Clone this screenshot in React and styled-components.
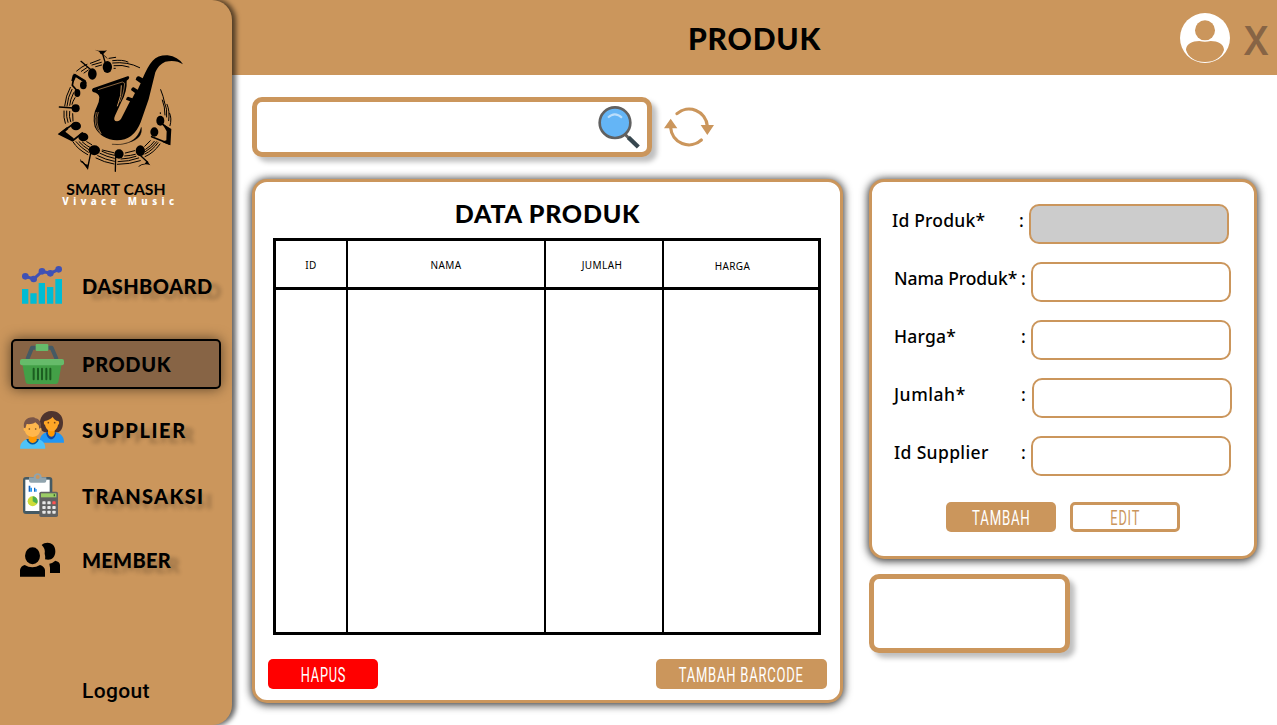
import React from "react";
import styled, { createGlobalStyle } from "styled-components";

const TAN = "#cb965c";
const BROWN = "#876445";

const GlobalStyle = createGlobalStyle`
  * { box-sizing: border-box; }
  body { margin: 0; background: #fff; overflow: hidden; }
`;

const Page = styled.div`
  display: flex;
  width: 1277px;
  height: 725px;
  background: linear-gradient(${TAN} 75px, #fff 75px);
  font-family: Lato, "Liberation Sans", sans-serif;
  color: #000;
`;

const Sidebar = styled.aside`
  position: relative;
  flex: 0 0 232px;
  height: 725px;
  background: ${TAN};
  border-radius: 0 20px 20px 0;
  box-shadow: 3px 0 5px 1px rgba(0, 0, 0, 0.6);
`;

const LogoWrap = styled.div`
  padding: 35px 0 0 40px;
  height: 261px;
  svg { display: block; }
`;

const NavItem = styled.a`
  display: flex;
  align-items: center;
  width: 210px;
  height: 50px;
  margin: 0 0 ${(p) => p.$gap || 0}px 11px;
  padding-left: 7px;
  border: 2px solid ${(p) => (p.$active ? "#000" : "transparent")};
  border-radius: 5px;
  background: ${(p) => (p.$active ? BROWN : "transparent")};
  box-shadow: ${(p) => (p.$active ? "0 0 13px rgba(0,0,0,.55)" : "none")};
  svg { flex: none; margin-right: 18px; }
`;

const NavText = styled.span`
  font-size: 20px;
  font-weight: 900;
  line-height: 24px;
  white-space: nowrap;
  letter-spacing: ${(p) => p.$track}px;
  text-shadow: ${(p) => (p.$flat ? "none" : "9px 5px 4px rgba(0,0,0,.24)")};
`;

const Logout = styled.a`
  display: block;
  margin: 81px 0 0 82px;
  padding-top: 13px;
  font: 500 21px/24px Roboto, sans-serif;
  letter-spacing: 0.35px;
`;

const Main = styled.main`
  flex: 1;
  min-width: 0;
`;

const Header = styled.header`
  display: flex;
  align-items: center;
  height: 75px;
  padding-left: 456px;
`;

const PageTitle = styled.h1`
  flex: 0 0 492px;
  margin: 0;
  font-size: 30px;
  font-weight: 900;
  line-height: 36px;
  letter-spacing: 0.8px;
`;

const Close = styled.button`
  margin: 6px 0 0 13px;
  padding: 0;
  border: 0;
  background: none;
  color: ${BROWN};
  font: 600 40px/48px Inter, sans-serif;
  transform: scaleX(0.91);
  transform-origin: left;
`;

const Content = styled.div`
  padding: 22px 0 0 20px;
`;

const SearchRow = styled.div`
  display: flex;
  align-items: center;
  gap: 12px;
  height: 60px;
`;

const SearchBox = styled.div`
  display: flex;
  justify-content: flex-end;
  width: 400px;
  height: 60px;
  padding-right: 3px;
  border: 5px solid ${TAN};
  border-radius: 10px;
  background: #fff;
  box-shadow: 5px 5px 5px rgba(0, 0, 0, 0.25);
`;

const Columns = styled.div`
  display: flex;
  align-items: flex-start;
  gap: 26px;
  margin-top: 22px;
`;

const Card = styled.section`
  width: ${(p) => p.$w}px;
  height: ${(p) => p.$h}px;
  border: 3px solid ${TAN};
  border-radius: 15px;
  background: #fff;
  box-shadow: 0 1px 9px 1px rgba(0, 0, 0, 0.8);
`;

const CardTitle = styled.h2`
  margin: 0;
  padding-top: 15px;
  height: 56px;
  text-align: center;
  font-size: 25px;
  font-weight: 900;
  line-height: 32px;
  letter-spacing: 0.75px;
`;

const Table = styled.div`
  display: grid;
  grid-template-columns: 72px 198px 118px 154px;
  grid-template-rows: 49px 342px;
  width: 548px;
  height: 397px;
  margin-left: 18px;
  border: 3px solid #000;
`;

const Cell = styled.div`
  border-right: ${(p) => (p.$last ? 0 : 2)}px solid #000;
  border-bottom: ${(p) => (p.$head ? 3 : 0)}px solid #000;
  padding-top: ${(p) => (p.$last ? 18 : 17)}px;
  padding-right: ${(p) => p.$pull || 0}px;
  text-align: center;
  font: 400 10px/14px "Noto Sans", sans-serif;
  letter-spacing: 0.4px;
`;

const TableActions = styled.div`
  display: flex;
  justify-content: space-between;
  padding: 24px 13px 0;
`;

const Button = styled.button`
  display: flex;
  align-items: center;
  justify-content: center;
  width: ${(p) => p.$w || 110}px;
  height: 30px;
  padding: 0;
  border: ${(p) => (p.$outline ? `3px solid ${TAN}` : 0)};
  border-radius: 5px;
  background: ${(p) => (p.$outline ? "#fff" : p.$bg || TAN)};
  color: ${(p) => (p.$outline ? TAN : "#fff")};
`;

const Narrow = styled.span`
  font: 400 20px/30px Roboto, sans-serif;
  white-space: nowrap;
  letter-spacing: 1.2px;
  transform: translateY(0.5px) scaleX(${(p) => p.$scale});
`;

const Side = styled.div`
  display: flex;
  flex-direction: column;
  gap: 15px;
`;

const Fields = styled.div`
  display: flex;
  flex-direction: column;
  gap: 18px;
  padding: 22px 0 26px;
`;

const Field = styled.label`
  display: flex;
  padding-left: ${(p) => p.$left}px;
  font: 500 17.5px/26px "Noto Sans", sans-serif;
`;

const FieldName = styled.span`
  flex: 0 0 127px;
  min-width: 0;
  padding-top: 3px;
  white-space: nowrap;
  letter-spacing: ${(p) => p.$track}px;
`;

const Colon = styled.span`
  flex: 0 0 ${(p) => p.$w}px;
  min-width: 0;
  padding-top: 3px;
`;

const Input = styled.input`
  flex: none;
  width: 200px;
  height: 40px;
  border: 2px solid ${TAN};
  border-radius: 10px;
  background: #fff;
  &:disabled { background: #ccc; }
`;

const FormActions = styled.div`
  display: flex;
  gap: 14px;
  padding-left: 74px;
`;

const Preview = styled.div`
  width: 201px;
  height: 79px;
  border: 5px solid ${TAN};
  border-radius: 10px;
  background: #fff;
  box-shadow: 5px 5px 5px rgba(0, 0, 0, 0.25);
`;

const NOTES = [
  [202, 96, 14, 18], [157, 117, 13, 17], [130, 151, 10, 12], [112, 174, 9, 12],
  [107, 220, 12, 12], [108, 273, 15, 13], [130, 306, 15, 13], [163, 346, 17, 15],
  [237, 357, 14, 14], [301, 347, 14, 16], [343, 291, 12, 14], [361, 257, 12, 15],
];

function Logo() {
  return (
    <svg width="160" height="180" viewBox="0 0 480 540">
      <g fill="none" stroke="#000" strokeWidth="3" strokeLinecap="round">
        <path d="M207 70l20-3M218 77q30-4 46 4M218 84q45-5 81 14M222 92q26-3 45 4M222 100h4" />
        <path d="M141 88q-15 6-31 20M142 97l-18 12M145 105l-13 9M180 74l-29 11M184 82l-28 8M185 90l-18 5" />
        <path d="M91 157q-14 25-17 56M96 163q-13 24-15 50M101 173q-11 22-12 38M105 188q-8 13-9 20" />
        <path d="M72 228q-2 20 4 37M80 228q-2 17 4 34M89 229q-3 16 3 31M98 236l1 22" />
        <path d="M100 322q12 20 43 37M108 320q13 17 37 32M117 320q11 13 31 25M127 321q13 12 26 18M140 320l15 9" />
        <path d="M168 369q24 13 54 18M173 362q23 12 50 17M180 355q20 10 43 15M186 349q16 8 37 12M187 345l34 8" />
        <path d="M232 388q38 0 69-11M234 380q32 0 62-11M243 372q25-1 45-8M254 363q18-1 32-5M256 354l28-7" />
        <path d="M315 365q26-11 45-38M315 357q23-11 39-34M316 350q21-12 34-30M317 343q16-10 26-24M314 334l17-17" />
        <path d="M362 164q9 22 11 36M367 195q8 20 8 45M373 200q10 22 7 46M381 208q9 20 5 49M389 235q7 15 1 37M361 233v3" />
        <path d="M196 84L188 57" strokeWidth="4" />
        <path d="M157 108L123 79" strokeWidth="4" />
        <path d="M112 168L97 151L103 120L136 142" strokeWidth="5" />
        <path d="M101 219L58 216" strokeWidth="4" />
        <path d="M102 265L58 297L98 317L127 294" strokeWidth="5" />
        <path d="M153 350L143 399L127 380" strokeWidth="4" />
        <path d="M227 361L226 409" strokeWidth="4" />
        <path d="M294 355L323 382" strokeWidth="4" />
        <path d="M335 305L388 326V285L365 265M373 321L388 327" strokeWidth="5" />
        <path d="M217 328Q287 335 304 277Q309 310 268 322Q242 332 217 328" fill="#000" strokeWidth="1" />
      </g>
      <path d="M164 44q20 6 37 2q-9 9-12 12q14 9 18 20q-12-17-26-22q0-7-17-12zM55 296l27-21 3 7-9 8 25 20 1 9zM98 121l7-5 32 20 4 10-33-20-7 14-7-3zM120 371q10 16 24 18l-1 16q-7-18-21-24zM321 377l10 14q-19-8-37 6q6-11 20-11zM366 265l28 17-3 49-26-11 14-4 1-27z" />
      {NOTES.map(([x, y, rx, ry]) => (
        <ellipse key={`${x}-${y}`} cx={x} cy={y} rx={rx} ry={ry} />
      ))}
      <path d="M429 88Q408 73 376 80Q356 88 346 112L326 193L302 262Q281 316 231 316Q183 313 164 275Q155 244 171 214Q178 200 178 187Q177 175 159 171Q153 166 159 160L265 123Q270 127 266 132L260 137Q262 169 244 201L225 242Q218 258 231 259Q240 259 246 246L270 199L258 194Q259 186 264 185L277 190L285 174L273 165Q275 155 281 157L293 164L302 145L287 134Q290 122 297 124L308 130Q324 92 338 77Q354 60 383 61Q414 65 429 88Z" />
      <g fill="none" stroke={TAN} strokeWidth="3">
        <path d="M174 164L247 141L254 145Q251 180 239 202" strokeWidth="2" />
        <path d="M244 151Q246 180 232 214" />
        <path d="M169 231Q157 272 183 296Q163 263 175 231" strokeWidth="2" />
      </g>
      <text x="79" y="479" textLength="298" lengthAdjust="spacingAndGlyphs" fontFamily="Lato" fontWeight="700" fontSize="47">SMART CASH</text>
      <text x="67" y="510" textLength="335" fontFamily="Noto Sans" fontWeight="800" fontSize="29" fill="#fff">Vivace Music</text>
    </svg>
  );
}

function NavIcon({ top, children }) {
  return (
    <svg width="44" height="46" viewBox={`60 ${top} 132 138`}>
      {children}
    </svg>
  );
}

const ChartIcon = () => (
  <NavIcon top={39}>
    <path fill="#00bcd4" d="M66 117h19v44H66zM91 130h19v31H91zM116 99h19v62h-19zM141 111h19v50h-19zM166 87h20v74h-20z" />
    <path d="M76 79L101 87L126 64L151 70L176 58" fill="none" stroke="#3f51b5" strokeWidth="9" />
    <g fill="#3f51b5">
      <circle cx="76" cy="79" r="10" /><circle cx="101" cy="87" r="10" /><circle cx="126" cy="64" r="10" />
      <circle cx="151" cy="70" r="10" /><circle cx="176" cy="58" r="10" />
    </g>
  </NavIcon>
);

const BasketIcon = () => (
  <NavIcon top={273}>
    <path d="M82 328L96 293H155L170 328" fill="none" stroke="#455a64" strokeWidth="12" strokeLinejoin="round" />
    <rect x="107" y="282" width="38" height="21" rx="3" fill="#66bb6a" />
    <path fill="#43a047" d="M67 342H185L175 396Q174 402 167 402H85Q78 402 77 396Z" />
    <rect x="60" y="327" width="132" height="19" rx="6" fill="#66bb6a" />
    <path stroke="#1b5e20" strokeWidth="6" strokeLinecap="round" d="M101 356v32M114 356v32M126 356v32M139 356v32M151 356v32" />
  </NavIcon>
);

const PeopleIcon = () => (
  <NavIcon top={36}>
    <path fill="#4e342e" d="M154 48c-23 0-36 20-34 40 1 15 7 23 16 24h39c10-5 14-14 14-30 0-20-14-34-35-34z" />
    <path fill="#2196f3" d="M119 143c0-20 9-28 22-31h27c15 4 24 13 24 31z" />
    <path fill="#0d47a1" d="M138 112c4 28 27 28 31 0z" />
    <path fill="#ff9800" d="M144 100h20v16c-3 12-16 12-20 0z" />
    <path fill="#ffa726" d="M134 78c-4 3-3 11 1 12 3 13 12 19 20 19s17-7 19-19c4-1 5-9 1-12-8 0-13-5-17-12-6 7-14 10-24 12z" />
    <g fill="#784719"><circle cx="145" cy="83" r="2.500" /><circle cx="164" cy="83" r="2.500" /></g>
    <path fill="#4fc3f7" d="M60 161c0-20 12-27 28-30h22c17 3 26 12 26 30z" />
    <path fill="#01579b" d="M79 132c6 22 32 22 38 0z" />
    <path fill="#ff9800" d="M86 118h24v18c-5 11-19 11-24 0z" />
    <path fill="#ffb74d" d="M74 97c-5 2-4 11 1 12 2 11 13 17 23 17s20-6 22-17c5-1 6-10 1-12V88L109 79 75 87z" />
    <path fill="#795548" d="M72 98c-3-17 6-31 26-31 3 0 7 1 8 3 11 1 19 12 17 28l-5 3-2-10-10-9c-8 6-20 6-26 5l-4 13z" />
    <g fill="#784719"><circle cx="88" cy="102" r="2.500" /><circle cx="107" cy="102" r="2.500" /></g>
  </NavIcon>
);

const ReportIcon = () => (
  <NavIcon top={234}>
    <rect x="69" y="246" width="88" height="111" rx="9" fill="#455a64" />
    <rect x="76" y="254" width="73" height="94" fill="#fff" />
    <path fill="#90a4ae" d="M87 247h14c0-16 24-16 24 0h14v10q0 6-6 6H93q-6 0-6-6z" />
    <circle cx="113" cy="246" r="6" fill={TAN} />
    <path d="M86 272h5v18h-5zM102 278h4v12h-4z" fill="#1565c0" />
    <path d="M91 278h5v12h-5zM106 282h4v8h-4z" fill="#2196f3" />
    <circle cx="98" cy="319" r="15" fill="#cddc39" />
    <path fill="#4caf50" d="M98 304a15 15 0 0 1 13 22L98 319z" />
    <rect x="118" y="290" width="56" height="76" rx="5" fill="#616161" />
    <rect x="123" y="295" width="46" height="12" fill="#9ccc65" />
    <path fill="#33691e" d="M161 298h4v6h-4z" />
    <g fill="#e7e7e7">
      {[319, 333, 347].map((y) => [127, 142, 157].map((x) => (
        <rect key={`${x}${y}`} x={x} y={y} width="10" height="9" rx="2" fill={x === 157 && y === 319 ? "#ff5252" : undefined} />
      )))}
    </g>
  </NavIcon>
);

const MembersIcon = () => (
  <NavIcon top={426}>
    <ellipse cx="97.500" cy="482" rx="22.500" ry="25.500" />
    <path d="M60 545v-20q2-12 14-15 23 14 46 0 13 4 15 15v20z" />
    <path d="M125 450c13-13 41-9 41 19 0 20-13 29-31 24 1-5 1-10-1-17 2-11-1-18-9-26z" />
    <path d="M148 506q9-1 18-9 13 3 14 13v24h-30q1-17-2-28z" />
  </NavIcon>
);

const SearchIcon = () => (
  <svg width="50" height="50" viewBox="0 0 150 150">
    <g transform="translate(1 1)">
      <path d="M93 97L103 107" stroke="#616161" strokeWidth="9" />
      <path d="M102 105L132 134" stroke="#37474f" strokeWidth="13" />
      <circle cx="62" cy="61" r="46" fill="#64b5f6" stroke="#616161" strokeWidth="8" />
      <path d="M41 46Q61 26 83 46" fill="none" stroke="#bbdefb" strokeWidth="6" />
    </g>
  </svg>
);

const RefreshIcon = () => (
  <svg width="50" height="40" viewBox="252 66 150 120">
    <g fill="none" stroke={TAN} strokeWidth="9.500" strokeLinecap="round">
      <path d="M291 86A55 55 0 0 1 382 123" />
      <path d="M364 165A55 55 0 0 1 272 128" />
    </g>
    <path fill={TAN} d="M252 130L272 101L292 130ZM362 120H402L382 150Z" />
  </svg>
);

const UserIcon = () => (
  <svg width="50" height="50" viewBox="90 39 150 150">
    <circle cx="165" cy="114" r="75" fill="#fff" />
    <g fill={TAN}>
      <circle cx="165" cy="91" r="30" />
      <path d="M108 150C108 132 127 123 148 123Q165 127 182 123C203 123 222 132 222 150C216 172 193 186 165 186S114 172 108 150Z" />
    </g>
  </svg>
);

const NAV = [
  { text: "DASHBOARD", icon: ChartIcon, gap: 28, track: 0.45 },
  { text: "PRODUK", icon: BasketIcon, gap: 16, track: 0.6, active: true },
  { text: "SUPPLIER", icon: PeopleIcon, gap: 16, track: 1.6 },
  { text: "TRANSAKSI", icon: ReportIcon, gap: 14, track: 1.35 },
  { text: "MEMBER", icon: MembersIcon, gap: 0, track: 0.3 },
];

const FIELDS = [
  { name: "Id Produk*", left: 20, colon: 10, track: 0.2, disabled: true },
  { name: "Nama Produk*", left: 22, colon: 10, track: -0.1 },
  { name: "Harga*", left: 22, colon: 10, track: 0.2 },
  { name: "Jumlah*", left: 22, colon: 11, track: 0.55 },
  { name: "Id Supplier", left: 22, colon: 10, track: 0.35 },
];

export default function App() {
  return (
    <Page>
      <GlobalStyle />
      <Sidebar>
        <LogoWrap><Logo /></LogoWrap>
        <nav>
          {NAV.map(({ text, icon: Icon, gap, track, active }) => (
            <NavItem key={text} $gap={gap} $active={active}>
              <Icon />
              <NavText $track={track} $flat={active}>{text}</NavText>
            </NavItem>
          ))}
        </nav>
        <Logout>Logout</Logout>
      </Sidebar>
      <Main>
        <Header>
          <PageTitle>PRODUK</PageTitle>
          <UserIcon />
          <Close>X</Close>
        </Header>
        <Content>
          <SearchRow>
            <SearchBox><SearchIcon /></SearchBox>
            <RefreshIcon />
          </SearchRow>
          <Columns>
            <Card $w={591} $h={524}>
              <CardTitle>DATA PRODUK</CardTitle>
              <Table>
                <Cell $head>ID</Cell>
                <Cell $head>NAMA</Cell>
                <Cell $head $pull={4}>JUMLAH</Cell>
                <Cell $head $last $pull={17}>HARGA</Cell>
                <Cell /><Cell /><Cell /><Cell $last />
              </Table>
              <TableActions>
                <Button $bg="#f00"><Narrow $scale={0.64}>HAPUS</Narrow></Button>
                <Button $w={171}><Narrow $scale={0.65}>TAMBAH BARCODE</Narrow></Button>
              </TableActions>
            </Card>
            <Side>
              <Card $w={388} $h={380}>
                <Fields>
                  {FIELDS.map((f) => (
                    <Field key={f.name} $left={f.left}>
                      <FieldName $track={f.track}>{f.name}</FieldName>
                      <Colon $w={f.colon}>:</Colon>
                      <Input disabled={f.disabled} />
                    </Field>
                  ))}
                </Fields>
                <FormActions>
                  <Button><Narrow $scale={0.66}>TAMBAH</Narrow></Button>
                  <Button $outline><Narrow $scale={0.64}>EDIT</Narrow></Button>
                </FormActions>
              </Card>
              <Preview />
            </Side>
          </Columns>
        </Content>
      </Main>
    </Page>
  );
}
